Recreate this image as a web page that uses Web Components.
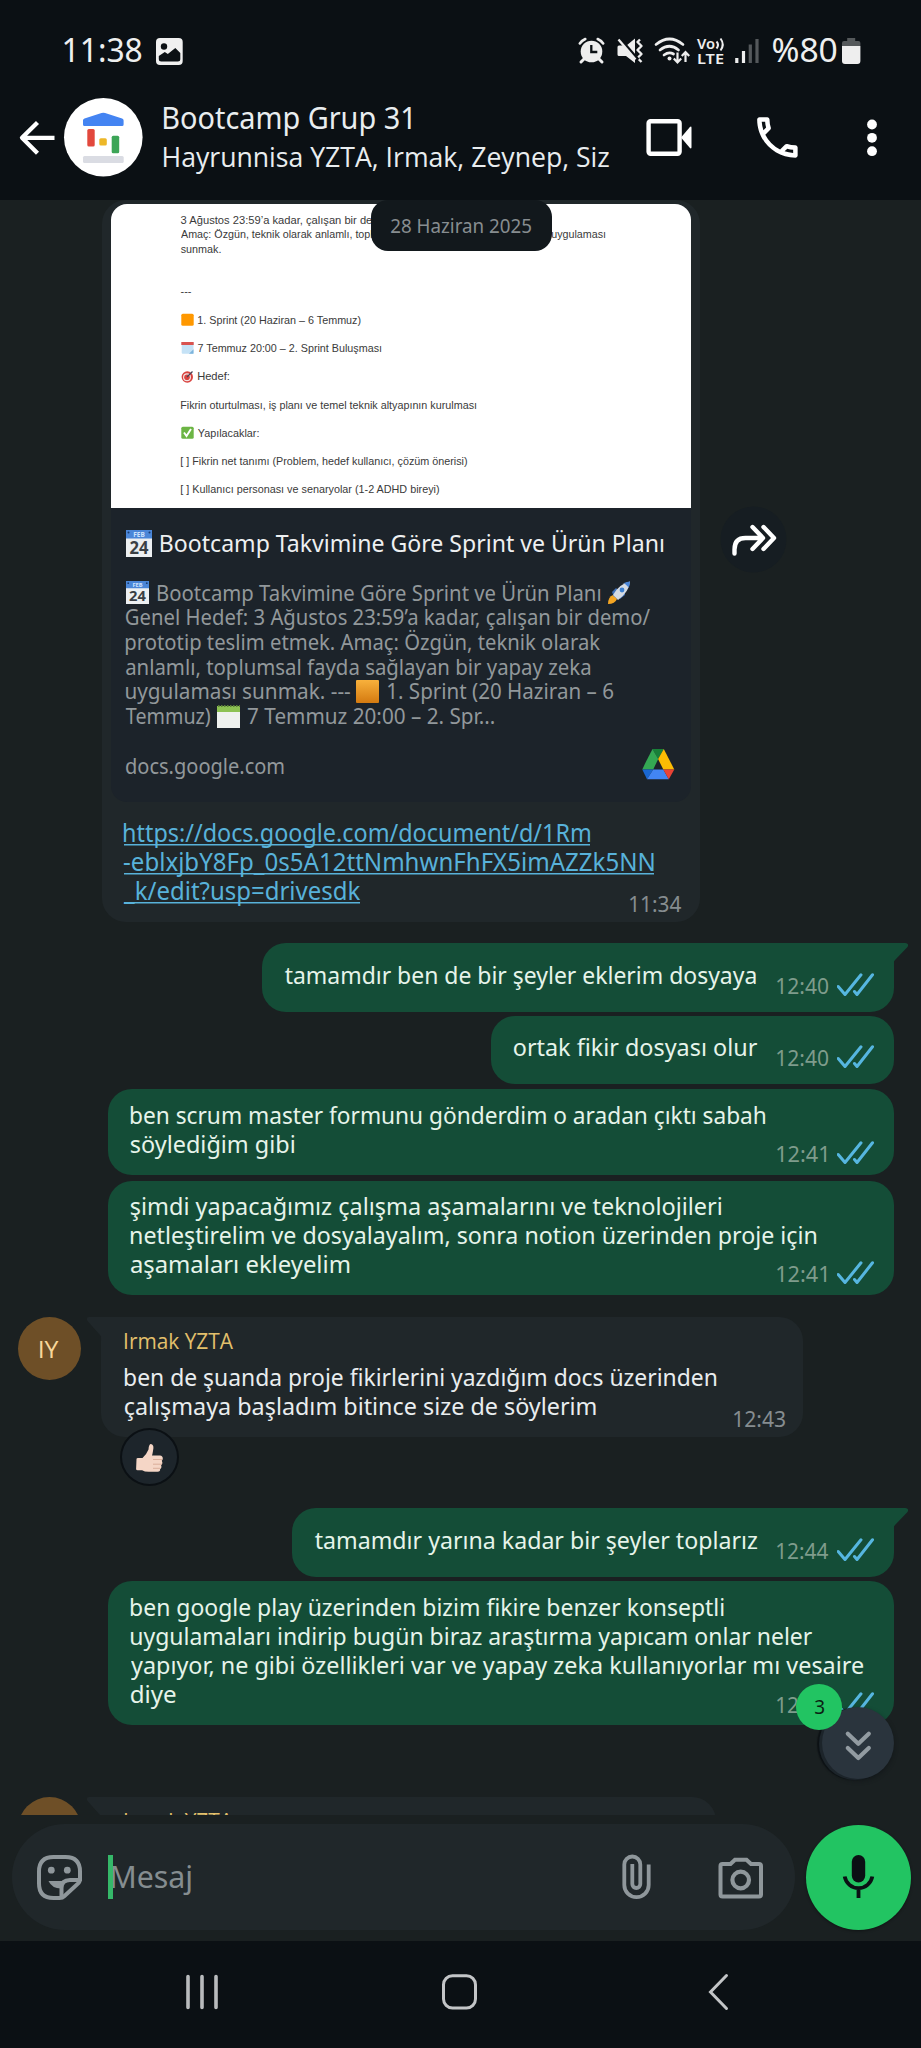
<!DOCTYPE html>
<html>
<head>
<meta charset="utf-8">
<title>Bootcamp Grup 31</title>
<style>
html,body{margin:0;padding:0;background:#0b1014}
body{font-family:"Noto Sans","Open Sans",sans-serif;color:#e9edef;width:921px;height:2048px;overflow:hidden}
</style>
</head>
<body>
<chat-app></chat-app>
<script>
const ctx = document.createElement('canvas').getContext('2d');
const define = (name, html, setup) => customElements.define(name, class extends HTMLElement {
  connectedCallback() {
    if (this.shadowRoot) return;
    const root = this.attachShadow({mode: 'open'});
    const t = document.createElement('template');
    t.innerHTML = typeof html === 'function' ? html(this) : html;
    root.appendChild(t.content.cloneNode(true));
    if (setup) setup(this, root);
  }
});

/* One line of text whose inked width is w pixels, at font size s and line height lh. */
customElements.define('fit-text', class extends HTMLElement {
  connectedCallback() {
    if (this.shadowRoot) return;
    const root = this.attachShadow({mode: 'open'});
    const w = +this.getAttribute('w'), s = this.getAttribute('s') || 24, lh = this.getAttribute('lh') || 29;
    root.innerHTML = `<style>:host{display:block;flex:none;width:${w}px;height:${lh}px;line-height:${lh}px;font-size:${s}px;white-space:pre}
      :host([plain]){font-family:"Open Sans","Noto Sans",sans-serif}
      span{display:inline-block;transform-origin:0 0;vertical-align:top}</style><span><slot></slot></span>`;
    const span = root.querySelector('span');
    const cs = getComputedStyle(this);
    /* Side bearings are measured at ten times the size, as the canvas rounds them to whole pixels. */
    ctx.font = `${cs.fontWeight} ${s * 10}px ${cs.fontFamily}`;
    const m = ctx.measureText(this.textContent);
    const adv = span.getBoundingClientRect().width;
    const left = -m.actualBoundingBoxLeft / 10, right = (m.width - m.actualBoundingBoxRight) / 10;
    const k = w / (adv - left - right);
    span.style.transform = `translateX(${-left * k}px) scaleX(${k})`;
  }
});

/* Icon artwork; each entry is [viewBox, markup]. */
const ICONS = {
  gallery: ['156 27 28 44', '<rect x="156" y="38" width="26.7" height="27" rx="4" fill="#f0f0f0"/><circle cx="164" cy="46.5" r="3.2" fill="#0b1014"/><path d="M158.8 59v-3l6-4 3 2 7.500-6 5 5v6q0 2.500-2.500 2.500h-16.500q-2.500 0-2.500-2.500z" fill="#0b1014"/>'],
  alarm: ['576 27 34 44', '<circle cx="591.500" cy="51.500" r="10.800" fill="#eee"/><path d="M579.800 43.500a13 13 0 0 1 5.500-4.500M603.200 43.500a13 13 0 0 0-5.500-4.500" fill="none" stroke="#eee" stroke-width="2.600" stroke-linecap="round"/><path d="M584 59l-3 3M599 59l3 3" stroke="#eee" stroke-width="3" stroke-linecap="round"/><path d="M591.300 45v7h6" fill="none" stroke="#0b1014" stroke-width="2.300"/>'],
  mute: ['610 27 40 44', '<path d="M617.500 47q0-1.500 1.500-1.500h7.500l8.500-7v24.500l-9-7h-7q-1.500 0-1.500-1.500z" fill="#eee"/><path d="M640 39.500l-2.500 2.500 4 4-4 4 4 4-4 4 4 4" fill="none" stroke="#eee" stroke-width="2.400" stroke-linejoin="round"/><path d="M618 37l20 23" stroke="#0b1014" stroke-width="3.500"/><path d="M618.500 39.500l17 20" stroke="#eee" stroke-width="2.300"/>'],
  wifi: ['650 27 44 44', '<g fill="none" stroke="#eee" stroke-width="2.700" stroke-linecap="round"><path d="M656 44.500q13.500-11 27 0M660 50q9.500-7.500 18.500 0M664 55q5-3.800 9.500-1"/></g><circle cx="669.500" cy="58.500" r="2" fill="#eee"/><path d="M677.500 52.500v9.500M673.800 58.500l3.700 4 3.700-4M685.500 62v-9.500M681.800 56l3.700-4 3.700 4" fill="none" stroke="#eee" stroke-width="2.200"/>'],
  volte: ['694 27 36 44', '<g fill="#eee" font-family="Noto Sans" font-weight="600"><text x="697" y="49" font-size="15" textLength="18" lengthAdjust="spacingAndGlyphs">Vo</text><text x="697" y="63.800" font-size="14.500" textLength="27" lengthAdjust="spacingAndGlyphs">LTE</text></g><path d="M716.500 41.500q3 3.300 0 7M720.500 38.500q4.500 6 0 12" fill="none" stroke="#eee" stroke-width="2"/>'],
  signal: ['730 27 36 44', '<path d="M736.800 58v5" stroke="#eee" stroke-width="3.200"/><path d="M743.500 51v12" stroke="#eee" stroke-width="3.200"/><path d="M750.300 44.500v18.500M757 39v24" stroke="#54585b" stroke-width="3.200"/>'],
  battery: ['841 27 21 44', '<path d="M842 46v-3q0-2 2-2h3.200v-3h8v3h3.200q2 0 2 2v3z" fill="#55595b"/><path d="M842 46h18.400v15q0 3-3 3h-12.400q-3 0-3-3z" fill="#eee"/>'],
  back: ['12 75 46 125', '<path d="M37.500 122.500L22 137.800l15.500 15.500M22.500 137.800h32" fill="none" stroke="#fff" stroke-width="4.300" stroke-linejoin="round"/>'],
  logo: ['58 75 92 125', '<circle cx="103.300" cy="137.300" r="39.300" fill="#fff"/><path d="M83 120.500q0-1.500 1.500-2l17-5.500q1.800-.7 3.600 0l17 5.500q1.500.5 1.500 2v4q0 1.500-1.500 1.500h-37.600q-1.500 0-1.500-1.500z" fill="#4484f2"/><rect x="87.300" y="129" width="7.400" height="17.600" rx="1.500" fill="#e2483d"/><rect x="99.300" y="138.200" width="7.500" height="7.200" rx="1.500" fill="#edb728"/><rect x="111.700" y="135.700" width="7.500" height="17.500" rx="1.500" fill="#3ca557"/><rect x="83" y="156" width="40.700" height="7" rx="1.500" fill="#dadce3"/>'],
  video: ['640 75 60 125', '<rect x="648.600" y="121.200" width="31" height="32.600" rx="2" fill="none" stroke="#fff" stroke-width="4.400"/><path d="M681 137.500l8.500-10q2-2 2 .5v19q0 2.500-2 .5z" fill="#fff"/>'],
  phone: ['750 75 56 125', '<path transform="translate(750.400 110.400) scale(2.250)" fill="#fff" d="M6.540 5c.06.89.21 1.760.45 2.590l-1.200 1.200c-.41-1.200-.67-2.470-.76-3.790h1.510m9.860 12.020c.85.24 1.720.39 2.600.45v1.490c-1.320-.09-2.590-.35-3.800-.75l1.200-1.190M7.500 3H4c-.55 0-1 .45-1 1 0 9.390 7.610 17 17 17 .55 0 1-.45 1-1v-3.490c0-.55-.45-1-1-1-1.240 0-2.450-.2-3.570-.57a.84.84 0 0 0-.31-.05c-.26 0-.51.1-.71.29l-2.200 2.200a15.149 15.149 0 0 1-6.590-6.590l2.200-2.200c.28-.28.36-.67.25-1.020A11.360 11.360 0 0 1 8.500 4c0-.55-.45-1-1-1z"/>'],
  dots: ['860 75 24 125', '<g fill="#fff"><circle cx="872" cy="124.500" r="4.900"/><circle cx="872" cy="137.800" r="4.900"/><circle cx="872" cy="151.200" r="4.900"/></g>'],
  forward: ['720 506 67 67', '<circle cx="753.500" cy="539.500" r="33" fill="#161d22"/><path d="M734.500 553.500v-4q0-11.500 11-11.500h16M752.500 527l10.500 11-10.500 11M763.500 527l10.500 11-10.500 11" fill="none" stroke="#fff" stroke-width="4.400" stroke-linecap="round" stroke-linejoin="round"/>'],
  calendar: ['0 0 26 27', '<rect width="26" height="27" fill="#eceff1"/><rect width="26" height="8.500" fill="#4a86d8"/><circle cx="2.500" cy="2.500" r="1" fill="#1c3c70"/><circle cx="23.500" cy="2.500" r="1" fill="#1c3c70"/><g font-family="Noto Sans" font-weight="700" text-anchor="middle"><text x="13" y="7" font-size="6.500" fill="#cfe2fb">FEB</text><text x="13" y="24" font-size="17" fill="#3a3f44" textLength="19" lengthAdjust="spacingAndGlyphs">24</text></g>'],
  rocket: ['0 0 24 24', '<path d="M1 23q0-7 5-9l4 4q-2 5-9 5z" fill="#f5a623"/><path d="M5 11l4-4 3 3-5 6zM13 18l5-4 0-4-6 5z" fill="#3f6fb5"/><path d="M6 14Q12 3 23 .500 22 11 11 19z" fill="#d5dbe3"/><path d="M17 2q3-1.300 6-1.500-.2 3-1.200 6z" fill="#4a86d8"/><circle cx="15" cy="9" r="2.400" fill="#3b7fd0"/>'],
  orange: ['0 0 23 23', '<defs><linearGradient id="g" x2="0" y2="1"><stop offset="0" stop-color="#f8b13c"/><stop offset="1" stop-color="#d47a10"/></linearGradient></defs><rect width="23" height="23" rx="1" fill="url(#g)"/>'],
  notepad: ['0 0 23 23', '<rect y="1" width="23" height="22" fill="#eef1ee"/><rect y="1" width="23" height="6" fill="#8cc152"/><path d="M1 1h22" stroke="#5b7f38" stroke-width="2" stroke-dasharray="1.500 1.500"/>'],
  square: ['0 0 13 13', '<rect x=".3" y=".7" width="12.400" height="12" rx="1.500" fill="#ff9800"/>'],
  cal2: ['0 0 13 13', '<rect x=".7" y="1.500" width="11.800" height="11.200" rx="1" fill="#c5e2f6"/><rect x=".3" y="1" width="12.400" height="3" fill="#d9534f"/><path d="M8 12.700l4.500-4.500v4.500z" fill="#7db4dc"/>'],
  target: ['0 0 13 13', '<circle cx="6.300" cy="7" r="5.700" fill="#d9433f"/><circle cx="6" cy="7.200" r="4" fill="#f3e3e3"/><circle cx="6" cy="7.200" r="2.800" fill="#d9433f"/><path d="M6 7l5.500-5.500" stroke="#445" stroke-width="1.200"/>'],
  check: ['0 0 13 13', '<rect x=".3" y=".7" width="12.400" height="12" rx="1.500" fill="#6cb544"/><path d="M3 6.500l2.500 3.500 4.500-7" fill="none" stroke="#fff" stroke-width="1.900"/>'],
  drive: ['642 749 33 32', '<path d="M652.500 750h11.300l-5.700 10z" fill="#188038"/><path d="M663.800 750l10.500 20.500h-11l-5.200-10.500z" fill="#fbbc04"/><path d="M652.500 750l5.700 10-5 10.500h-10.900l3-6.500z" fill="#34a853"/><path d="M642.300 770.500h10.900l-6.200 9.800z" fill="#1967d2"/><path d="M653.200 770.500h10.100l5.500 9.800h-21.800z" fill="#4285f4"/><path d="M663.300 770.500h11l-5.500 9.800z" fill="#ea4335"/>'],
  ticks: ['0 0 38 24', '<path d="M1.200 13.500l6.800 8L24 1.800M17.500 18.500l2.500 3L35.500 1.800" fill="none" stroke="#56b6e0" stroke-width="3" stroke-linecap="round" stroke-linejoin="round"/>'],
  thumb: ['136 1442 28 31', '<path d="M136.500 1459q0-1 1.500-1h4.500q4.500-4.500 6-8.500.3-5.500 2.500-5.500 3.500.5 2 7-.5 3-1 4.500h8q2.800.3 2.800 3 0 1.500-1 2.200 1.500 3-.7 4.300 1 3-1 4 .5 2.500-2.500 2.700h-9q-4 0-6.500-1.500h-4.500q-1.500 0-1.500-1.200z" fill="#f5d6c6"/><path d="M153 1459.500h9M153 1464.200h9M153 1468.300h7" stroke="#d3a48f" stroke-width=".8"/>'],
  sticker: ['37 1852 47 50', '<g fill="none" stroke="#8f979b" stroke-width="4"><path d="M80 1881v-9.500q0-14.500-14.500-14.500h-12q-14.500 0-14.500 14.500v12q0 14.500 14.500 14.500h6q3 0 5-2l13-12q2.500-2 2.500-5z"/><path d="M80 1880h-10q-8.500 0-8.500 8v9"/></g><circle cx="51.300" cy="1870.200" r="3.400" fill="#8f979b"/><circle cx="67.300" cy="1870.200" r="3.400" fill="#8f979b"/><path d="M48.500 1881h17l-4.500 7.500q-9 0-12.500-7.500z" fill="#8f979b"/>'],
  clip: ['620 1852 32 50', '<path d="M648.700 1864.500v20.500a12.200 12.200 0 0 1-24.400 0v-20.500a8 8 0 0 1 16 0v19.500a4 4 0 0 1-8 0v-20" fill="none" stroke="#8f979b" stroke-width="3.800"/>'],
  camera: ['716 1852 50 50', '<path d="M722.500 1864h8l4.500-4.300h11.500l4.500 4.300h8q2 0 2 2v28.500q0 2-2 2h-36.500q-2 0-2-2v-28.500q0-2 2-2z" fill="none" stroke="#8f979b" stroke-width="4"/><circle cx="740.700" cy="1880" r="8.300" fill="none" stroke="#8f979b" stroke-width="4.200"/>'],
  mic: ['806 1825 105 105', '<rect x="851.800" y="1855" width="13.400" height="27.500" rx="6.700" fill="#0b1014"/><path d="M844.700 1876.500a14 14 0 0 0 27.600 0M858.500 1889v9" fill="none" stroke="#0b1014" stroke-width="3.800"/>'],
  down: ['822 1707 72 72', '<path d="M847.800 1733.800l10.500 10 10.500-10M847.800 1748l10.500 10 10.500-10" fill="none" stroke="#929ba1" stroke-width="4.200" stroke-linecap="round" stroke-linejoin="round"/>'],
  recents: ['184 1970 36 44', '<path d="M188 1976.500v31M202 1976.500v31M216 1976.500v31" stroke="#b9bbbd" stroke-width="3.600" stroke-linecap="round"/>'],
  home: ['440 1970 40 44', '<rect x="443.500" y="1975.700" width="32" height="32.300" rx="9" fill="none" stroke="#c3c5c7" stroke-width="3"/>'],
  prev: ['704 1970 28 44', '<path d="M726.500 1975.500l-16 16.500 16 16.500" fill="none" stroke="#c3c5c7" stroke-width="3" stroke-linecap="round"/>'],
  tailout: ['0 0 16 24', '<path d="M0 0H12Q16.500.500 14.500 4L2 17Q0 19 0 24z" fill="#144d37"/>'],
  tailin: ['0 0 16 24', '<path d="M16 0H3Q-.500.500 1.500 4L14 18Q16 20 16 24z" fill="#20272a"/>']
};
define('ui-icon', el => {
  const [vb, art] = ICONS[el.getAttribute('n')];
  const [, , w, h] = vb.split(' ');
  const W = el.getAttribute('w') || w, H = el.getAttribute('h') || h;
  return `<style>:host{display:block;flex:none;width:${W}px;height:${H}px}svg{display:block}</style><svg width="${W}" height="${H}" viewBox="${vb}" preserveAspectRatio="none">${art}</svg>`;
});

define('status-bar', `<style>:host{display:flex;height:48px;padding:27px 59px 0 64px;color:#eeefef}
  .end{display:flex;margin-left:auto}.pct{margin:1px 5px 0 7px}.clock{margin-top:1px}.gal{margin-left:14px}</style>
  <fit-text class="clock" w="77.500" s="32" lh="44">11:38</fit-text><ui-icon class="gal" n="gallery"></ui-icon>
  <div class="end"><ui-icon n="alarm"></ui-icon><ui-icon n="mute"></ui-icon><ui-icon n="wifi"></ui-icon><ui-icon n="volte"></ui-icon><ui-icon n="signal"></ui-icon>
  <fit-text class="pct" w="63.500" s="32" lh="44">%80</fit-text><ui-icon n="battery"></ui-icon></div>`);

define('chat-header', `<style>:host{display:flex;height:125px;padding:0 37px 0 12px}
  .who{margin-left:14px;padding-top:22.500px}.acts{display:flex;margin-left:auto}.acts ui-icon+ui-icon{margin-left:50px}.acts ui-icon:last-child{margin-left:54px}.who fit-text+fit-text{margin-top:1px}</style>
  <ui-icon n="back"></ui-icon><ui-icon n="logo"></ui-icon>
  <div class="who"><fit-text w="246.500" s="30" lh="40">Bootcamp Grup 31</fit-text><fit-text plain w="445" s="26.500" lh="36">Hayrunnisa YZTA, Irmak, Zeynep, Siz</fit-text></div>
  <div class="acts"><ui-icon n="video"></ui-icon><ui-icon n="phone"></ui-icon><ui-icon n="dots"></ui-icon></div>`);

define('link-preview', `<style>:host{display:block;width:580px;height:598px;border-radius:16px;background:#1c232a;overflow:hidden}
  .doc{height:304px;background:#fff;color:#3a3a3a;font-family:"Liberation Sans",Arimo,sans-serif;box-sizing:border-box;padding:9px 0 0 70px}
  .row{display:flex;align-items:center;margin-top:14.300px}.row ui-icon{margin-right:4px}
  .info{padding:0 15px;color:#92989b}
  .flex{display:flex;align-items:center}
  .title{color:#eef0f1;padding-top:19px;height:32px}
  .desc{padding-top:21.500px}.foot{display:flex;padding-top:16px;justify-content:space-between}.foot fit-text{margin-top:9px}.foot ui-icon{margin:3px 1px 0 0}</style>
  <div class="doc">
    <fit-text w="315" s="11.500" lh="14.300">3 Ağustos 23:59’a kadar, çalışan bir demo/prototip teslim etmek.</fit-text>
    <fit-text w="424" s="11.500" lh="14.300">Amaç: Özgün, teknik olarak anlamlı, toplumsal fayda sağlayan bir yapay zeka uygulaması</fit-text>
    <fit-text w="39.500" s="11.500" lh="14.300">sunmak.</fit-text>
    <div class="row" style="margin-top:28.500px"><fit-text w="10" s="11.500" lh="14">---</fit-text></div>
    <div class="row"><ui-icon n="square"></ui-icon><fit-text w="162.500" s="11.500" lh="14">1. Sprint (20 Haziran – 6 Temmuz)</fit-text></div>
    <div class="row"><ui-icon n="cal2"></ui-icon><fit-text w="183" s="11.500" lh="14">7 Temmuz 20:00 – 2. Sprint Buluşması</fit-text></div>
    <div class="row"><ui-icon n="target"></ui-icon><fit-text w="31" s="11.500" lh="14">Hedef:</fit-text></div>
    <div class="row"><fit-text w="295" s="11.500" lh="14">Fikrin oturtulması, iş planı ve temel teknik altyapının kurulması</fit-text></div>
    <div class="row"><ui-icon n="check"></ui-icon><fit-text w="60.500" s="11.500" lh="14">Yapılacaklar:</fit-text></div>
    <div class="row"><fit-text w="286" s="11.500" lh="14">[ ] Fikrin net tanımı (Problem, hedef kullanıcı, çözüm önerisi)</fit-text></div>
    <div class="row"><fit-text w="258" s="11.500" lh="14">[ ] Kullanıcı personası ve senaryolar (1-2 ADHD bireyi)</fit-text></div>
  </div>
  <div class="info">
    <div class="flex title"><ui-icon n="calendar" style="margin-right:9px"></ui-icon><fit-text w="502" s="23.500" lh="32">Bootcamp Takvimine Göre Sprint ve Ürün Planı</fit-text></div>
    <div class="desc">
      <div class="flex" style="height:24.700px"><ui-icon n="calendar" w="23" h="23" style="margin-right:9px"></ui-icon><fit-text w="442" s="21" lh="24.700">Bootcamp Takvimine Göre Sprint ve Ürün Planı</fit-text><ui-icon n="rocket" style="margin-left:7px"></ui-icon></div>
      <fit-text w="524" s="21" lh="24.700">Genel Hedef: 3 Ağustos 23:59’a kadar, çalışan bir demo/</fit-text>
      <fit-text w="474" s="21" lh="24.700">prototip teslim etmek. Amaç: Özgün, teknik olarak</fit-text>
      <fit-text w="464" s="21" lh="24.700">anlamlı, toplumsal fayda sağlayan bir yapay zeka</fit-text>
      <div class="flex"><fit-text w="224" s="21" lh="24.700">uygulaması sunmak. ---</fit-text><ui-icon n="orange" style="margin:0 9px 0 6px"></ui-icon><fit-text w="225" s="21" lh="24.700">1. Sprint (20 Haziran – 6</fit-text></div>
      <div class="flex"><fit-text w="84" s="21" lh="24.700">Temmuz)</fit-text><ui-icon n="notepad" style="margin:0 8px 0 7px"></ui-icon><fit-text w="246" s="21" lh="24.700">7 Temmuz 20:00 – 2. Spr...</fit-text></div>
    </div>
    <div class="foot"><fit-text w="157.500" s="21.500" lh="24">docs.google.com</fit-text><ui-icon n="drive"></ui-icon></div>
  </div>`);

/* Message bubble: text and time share one grid cell, so a long last line may run beside the time. */
define('msg-bubble', el => {
  const a = n => el.getAttribute(n), out = el.hasAttribute('out'), tail = el.hasAttribute('tail');
  const tw = /1$/.test(a('time') || '') ? 49 : 51;
  return `<style>
  :host{display:grid;position:relative;box-sizing:border-box;width:${a('w')}px;height:${a('h')}px;margin:${a('mt') || 0}px 0 0 ${out ? 894 - a('w') : 0}px;
    padding:${a('pt')}px ${a('pr') || (out ? 20 : 18)}px ${a('pb')}px ${a('pl') || 22.5}px;border-radius:24px;background:${out ? '#144d37' : '#20272a'};color:${out ? '#e6f4ea' : '#e9edef'};
    ${tail ? (out ? 'border-top-right-radius:0' : 'border-top-left-radius:0') : ''}}
  .c,.t{grid-area:1/1}.t{display:flex;align-items:flex-end;align-self:end;justify-self:end;color:${out ? '#7f9c8c' : '#868d90'};margin-right:${a('pr') ? 10 : 0}px}
  .t ui-icon{margin:0 -1px -1px ${60 - tw}px}
  .tail{position:absolute;top:0;${out ? 'right:-15px' : 'left:-15px'}}</style>
  <div class="c"><slot></slot></div>
  ${a('time') ? `<div class="t"><fit-text w="${tw}" s="21" lh="20">${a('time')}</fit-text>${out ? '<ui-icon n="ticks"></ui-icon>' : ''}</div>` : ''}
  ${tail ? `<ui-icon class="tail" n="${out ? 'tailout' : 'tailin'}"></ui-icon>` : ''}`;
});

define('user-avatar', `<style>:host{display:flex;flex:none;width:63px;height:63px;border-radius:50%;background:#6e4f27;color:#f8d79a;align-items:center;justify-content:center}</style><fit-text plain w="18.500" s="24.500" lh="34">IY</fit-text>`);

define('chat-log', `<style>:host{display:block;position:relative;height:1615px;overflow:hidden;background:#1a2021}
  .first{display:flex;margin-left:102px}.first ui-icon{margin:306px 0 0 20px}
  .in{display:flex;padding-left:18px}.in msg-bubble{margin-left:20px}
  .link{color:#58b2da}.link fit-text{background:linear-gradient(#58b2da,#58b2da) 0 26px/100% 1.500px no-repeat}
  .name{color:#e3c06c;margin-bottom:7px}
  .react{position:absolute;left:120px;top:1228px;width:55px;height:54px;border:2px solid #0b1014;border-radius:50%;background:#1d252b;display:flex;align-items:center;justify-content:center}
  .date{position:absolute;left:371px;top:0;width:181px;height:51px;box-sizing:border-box;padding:12px 0 0 19.500px;border-radius:17px;background:#12181c;color:#878d90}
  .down{position:absolute;left:822px;top:1507px;width:72px;height:72px;border-radius:50%;background:#2a343d;box-shadow:-3px 1px 0 #1c242a,-5px 1px 1px #0d1215,0 2px 4px #0b101480}
  .badge{position:absolute;left:796px;top:1484px;width:46px;height:46px;border-radius:50%;background:#22c462;color:#0b1f14;display:flex;align-items:center;justify-content:center}</style>
  <div class="first"><msg-bubble w="598" h="722" pt="4" pb="8" pl="9" pr="9" time="11:34">
    <link-preview></link-preview>
    <div class="link" style="padding:16px 0 0 13px"><fit-text w="466" s="24.500">https://docs.google.com/document/d/1Rm</fit-text><fit-text w="529.500" s="24.500">-eblxjbY8Fp_0s5A12ttNmhwnFhFX5imAZZk5NN</fit-text><fit-text w="236" s="24.500">_k/edit?usp=drivesdk</fit-text></div>
  </msg-bubble><ui-icon n="forward"></ui-icon></div>
  <msg-bubble out tail w="632" h="69" mt="21" pt="17" pb="16" time="12:40"><fit-text w="470.500">tamamdır ben de bir şeyler eklerim dosyaya</fit-text></msg-bubble>
  <msg-bubble out w="403" h="68" mt="4" pt="16" pb="16" time="12:40"><fit-text w="243">ortak fikir dosyası olur</fit-text></msg-bubble>
  <msg-bubble out w="786" h="86" mt="5" pt="11" pb="11" time="12:41"><fit-text w="634">ben scrum master formunu gönderdim o aradan çıktı sabah</fit-text><fit-text w="163">söylediğim gibi</fit-text></msg-bubble>
  <msg-bubble out w="786" h="114" mt="6" pt="10" pb="11" time="12:41"><fit-text w="590">şimdi yapacağımız çalışma aşamalarını ve teknolojileri</fit-text><fit-text w="685">netleştirelim ve dosyalayalım, sonra notion üzerinden proje için</fit-text><fit-text w="218">aşamaları ekleyelim</fit-text></msg-bubble>
  <div class="in" style="margin-top:22px"><user-avatar></user-avatar><msg-bubble tail w="702" h="120" pt="9" pb="8" pl="23.500" time="12:43"><fit-text plain class="name" w="108" s="22.500">Irmak YZTA</fit-text><fit-text w="591">ben de şuanda proje fikirlerini yazdığım docs üzerinden</fit-text><fit-text w="470.500">çalışmaya başladım bitince size de söylerim</fit-text></msg-bubble></div>
  <msg-bubble out tail w="602" h="69" mt="71" pt="17" pb="16" time="12:44"><fit-text w="442">tamamdır yarına kadar bir şeyler toplarız</fit-text></msg-bubble>
  <msg-bubble out w="786" h="144" mt="4" pt="11" pb="10" time="12:44"><fit-text w="592.500">ben google play üzerinden bizim fikire benzer konseptli</fit-text><fit-text w="681">uygulamaları indirip bugün biraz araştırma yapıcam onlar neler</fit-text><fit-text w="732">yapıyor, ne gibi özellikleri var ve yapay zeka kullanıyorlar mı vesaire</fit-text><fit-text w="44.500">diye</fit-text></msg-bubble>
  <div class="in" style="margin-top:72px"><user-avatar></user-avatar><msg-bubble tail w="615" h="120" pt="9" pb="8" pl="23.500"><fit-text plain class="name" w="108" s="22.500">Irmak YZTA</fit-text></msg-bubble></div>
  <div class="react"><ui-icon n="thumb"></ui-icon></div>
  <div class="date"><fit-text w="140" s="20.500" lh="26">28 Haziran 2025</fit-text></div>
  <div class="down"><ui-icon n="down"></ui-icon></div>
  <div class="badge"><fit-text w="9" s="19" lh="26">3</fit-text></div>`);

define('chat-composer', `<style>:host{display:flex;height:117px;padding:9px 0 0 12px;background:#1a2021}
  .pill{display:flex;align-items:center;box-sizing:border-box;width:783px;height:105.500px;border-radius:53px;background:#20272a;padding:0 29px 0 25px}
  .cur{width:4.700px;height:44px;background:#35b869;margin:0 -1px 0 24px;position:relative;z-index:1}
  .ph{color:#858d90;margin-top:1px}.clip{margin-left:auto}.cam{margin-left:64px}
  .mic{margin:1px 0 0 11px;width:105px;height:105px;border-radius:50%;background:#22c462;box-shadow:0 1px 3px #0006}</style>
  <div class="pill"><ui-icon n="sticker"></ui-icon><div class="cur"></div><fit-text class="ph" w="79" s="30" lh="42">Mesaj</fit-text><ui-icon class="clip" n="clip"></ui-icon><ui-icon class="cam" n="camera"></ui-icon></div>
  <div class="mic"><ui-icon n="mic"></ui-icon></div>`);

define('nav-bar', `<style>:host{display:flex;height:78px;padding:29px 0 0 184px}ui-icon+ui-icon{margin-left:220px}ui-icon:last-child{margin-left:224px}</style>
  <ui-icon n="recents"></ui-icon><ui-icon n="home"></ui-icon><ui-icon n="prev"></ui-icon>`);

define('chat-app', `<style>:host{display:flex;flex-direction:column;width:921px;height:2048px;background:#0b1014}</style>
  <status-bar></status-bar><chat-header></chat-header><chat-log></chat-log><chat-composer></chat-composer><nav-bar></nav-bar>`);
</script>
</body>
</html>
